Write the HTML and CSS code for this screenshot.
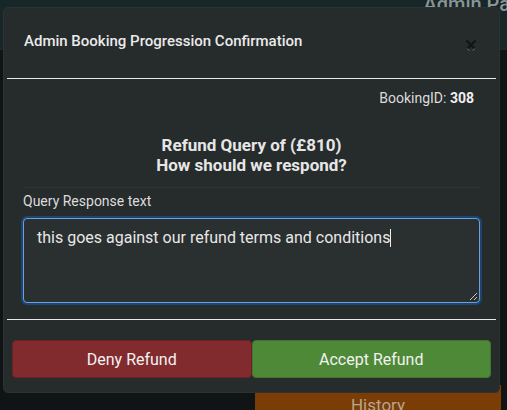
FILE: index.html
```html
<!DOCTYPE html>
<html>
<head>
<meta charset="utf-8">
<link rel="stylesheet" href="styles.css">
</head>
<body>
<div class="page">
  <div class="topbar"><span class="panel-title">Admin Panel</span></div>
  <div class="content">
    <div class="history">History</div>
  </div>
</div>
<div class="modal">
  <div class="modal-header">
    <h5 class="modal-title">Admin Booking Progression Confirmation</h5>
    <svg class="close" width="12" height="12" viewBox="0 0 12 12"><path d="M1.5 1.5L10.5 10.5M10.5 1.5L1.5 10.5" stroke="#121414" stroke-width="2.2"/><path d="M2 9.5L4 11.5M10 9.5L8 11.5" stroke="#8a8f90" stroke-width="1"/></svg>
  </div>
  <hr class="sep">
  <div class="modal-body">
    <div class="booking-id">BookingID: <b>308</b></div>
    <div class="question">Refund Query of (£810)<br>How should we respond?</div>
    <div class="faint"></div>
    <label class="label">Query Response text</label>
    <div class="textarea">this goes against our refund terms and conditions<span class="caret"></span>
      <svg class="grip" width="9" height="9" viewBox="0 0 9 9"><path d="M8 1L1 8M8 5L5 8" stroke="#c8c8c8" stroke-width="1"/></svg>
    </div>
  </div>
  <hr class="sep sep2">
  <div class="modal-footer">
    <button class="btn deny">Deny Refund</button>
    <button class="btn accept">Accept Refund</button>
  </div>
</div>
</body>
</html>
```
FILE: styles.css
```css
* { box-sizing: border-box; }
html, body { margin: 0; padding: 0; }
body {
  width: 507px; height: 410px; overflow: hidden;
  background: #141818;
  font-family: Roboto, "Noto Sans", sans-serif;
  position: relative;
}
.page { width: 507px; height: 410px; display: flex; flex-direction: column; overflow: hidden; }
.topbar {
  height: 50px; background: #172626;
  border-bottom: 1px solid #202828;
  display: flex; justify-content: flex-end;
}
.panel-title {
  color: #8a9494; font-size: 20px; font-weight: 500;
  margin-top: -8px; margin-right: -30px; white-space: nowrap;
}
.content {
  flex: 1; display: flex; justify-content: flex-end; align-items: flex-end;
  background: #111414;
}
.history {
  width: 246px; height: 25px; margin-right: 6px;
  background: #7a3d05; color: #b9a48f; text-align: center;
  font-size: 17px; padding-top: 10px; line-height: 20px; overflow: hidden;
}
.modal {
  position: absolute; left: 3px; top: 7px;
  width: 497px; height: 386px;
  background: #262b2c;
  border-radius: 5px;
  border: 1px solid #2c3233;
  color: #e6e6e6;
}
.modal-header {
  display: flex; justify-content: space-between; align-items: center;
  padding: 0 22px 0 20px; height: 66px;
}
.modal-title {
  margin: 0; font-size: 15px; font-weight: 500; color: #eaeaea;
}
.close { margin-top: 8px; }
.sep {
  margin: 4px 3px 0 3px; border: 0; height: 1px; background: #e8e8e8;
}
.modal-body { padding: 0 19px 0 19px; }
.booking-id {
  text-align: right; font-size: 14px; color: #dcdcdc;
  margin-top: 10px; padding-right: 6px; line-height: 18px;
}
.booking-id b { font-weight: 700; color: #f0f0f0; }
.question {
  text-align: center; font-size: 17px; font-weight: 700; color: #e6e6e6;
  line-height: 20px; margin-top: 28px;
}
.faint { height: 1px; background: #2f3536; margin: 12px 0 0 0; }
.label {
  display: block; font-size: 14px; color: #dcdcdc; line-height: 17px; margin-top: 5px;
}
.textarea {
  position: relative;
  margin-top: 8px;
  height: 85px;
  border: 1px solid #6aa0e0;
  border-radius: 4px;
  box-shadow: 0 0 0 2px #1f4470;
  background: #2a2f30;
  color: #e8e8e8;
  font-size: 16px;
  padding: 9px 13px;
  line-height: 19px;
}
.caret { display: inline-block; width: 1px; height: 18px; background: #f0f0f0; vertical-align: -4px; }
.grip { position: absolute; right: 1px; bottom: 1px; }
.sep2 { margin-top: 16px; }
.modal-footer { display: flex; padding: 20px 8px 0 8px; }
.btn {
  flex: 1; height: 38px; border-radius: 4px;
  font-family: Roboto, sans-serif; font-size: 16px; color: #f2f2f2;
  cursor: pointer;
}
.deny { background: #822b2f; border: 1px solid #6b2226; }
.accept { background: #4e8937; border: 1px solid #427430; }
```
